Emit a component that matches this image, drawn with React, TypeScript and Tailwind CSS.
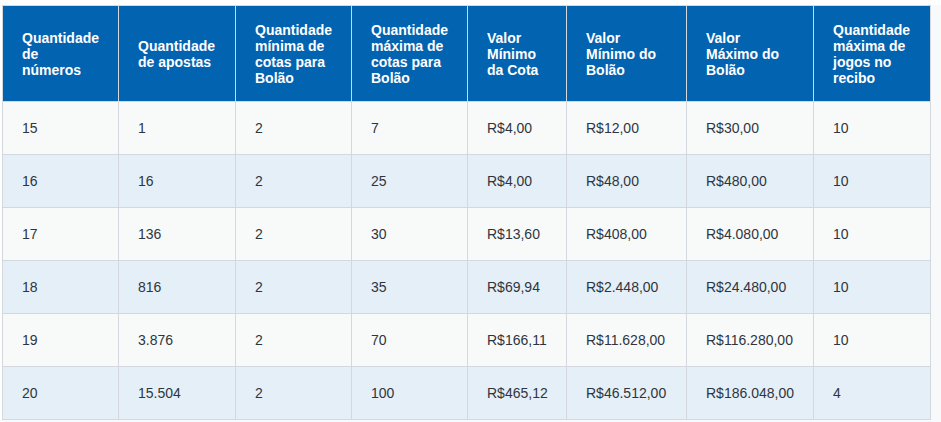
import React from 'react';

const HEADERS: string[][] = [
  ['Quantidade', 'de', 'números'],
  ['Quantidade', 'de apostas'],
  ['Quantidade', 'mínima de', 'cotas para', 'Bolão'],
  ['Quantidade', 'máxima de', 'cotas para', 'Bolão'],
  ['Valor', 'Mínimo', 'da Cota'],
  ['Valor', 'Mínimo do', 'Bolão'],
  ['Valor', 'Máximo do', 'Bolão'],
  ['Quantidade', 'máxima de', 'jogos no', 'recibo'],
];

const WIDTHS = ['w-[116px]', 'w-[117px]', 'w-[116px]', 'w-[116px]', 'w-[99px]', 'w-[120px]', 'w-[127px]', 'w-[117px]'];

const ROWS: string[][] = [
  ['15', '1', '2', '7', 'R$4,00', 'R$12,00', 'R$30,00', '10'],
  ['16', '16', '2', '25', 'R$4,00', 'R$48,00', 'R$480,00', '10'],
  ['17', '136', '2', '30', 'R$13,60', 'R$408,00', 'R$4.080,00', '10'],
  ['18', '816', '2', '35', 'R$69,94', 'R$2.448,00', 'R$24.480,00', '10'],
  ['19', '3.876', '2', '70', 'R$166,11', 'R$11.628,00', 'R$116.280,00', '10'],
  ['20', '15.504', '2', '100', 'R$465,12', 'R$46.512,00', 'R$186.048,00', '4'],
];

export default function App() {
  return (
    <div className="w-[941px] h-[422px] bg-[#f8f9fa] font-['Liberation_Sans',Arial,sans-serif]">
      <div className="bg-white h-[5px]" />
      <div className="flex">
        <div className="w-[2px] bg-white" />
        <table className="table-fixed border-collapse border border-[#d3d7de]">
          <thead>
            <tr className="h-[96px] bg-[#0263b1]">
              {HEADERS.map((lines, i) => (
                <th
                  key={i}
                  className={`${WIDTHS[i]} border border-[#d3d7de] pl-[19px] pr-2 text-left align-middle text-[14px] leading-[16px] font-bold text-white`}
                >
                  {lines.map((l, j) => (
                    <div key={j}>{l}</div>
                  ))}
                </th>
              ))}
            </tr>
          </thead>
          <tbody>
            {ROWS.map((row, r) => (
              <tr key={r} className={`h-[53px] ${r % 2 === 0 ? 'bg-[#f8fafa]' : 'bg-[#e5eff7]'}`}>
                {row.map((cell, c) => (
                  <td
                    key={c}
                    className="border border-[#d3d7de] pl-[19px] pr-2 align-middle text-[14px] text-[#2f3540]"
                  >
                    {cell}
                  </td>
                ))}
              </tr>
            ))}
          </tbody>
        </table>
      </div>
    </div>
  );
}
